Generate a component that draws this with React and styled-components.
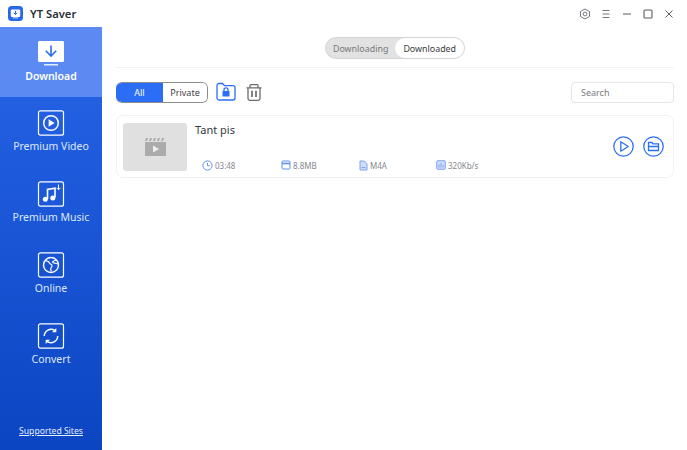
import React from "react";
import styled, { createGlobalStyle } from "styled-components";

const Global = createGlobalStyle`
  html, body { margin: 0; padding: 0; background: #fff; }
  body { font-family: "Noto Sans", "Open Sans", sans-serif; }
`;
const Page = styled.div`
  width: 687px; height: 450px; display: flex; flex-direction: column; overflow: hidden; background: #fff;
`;
const TitleBar = styled.header`
  height: 27px; flex: none; display: flex; align-items: center; padding-left: 8px; padding-right: 11px; gap: 7px;
`;
const AppName = styled.div`
  font-size: 11.2px; font-weight: 600; color: #2b2f36; flex: 1;
`;
const WinControls = styled.div`
  display: flex; align-items: center; gap: 7px; color: #6a6d72;
  svg { display: block; }
`;
const Body = styled.div`
  flex: 1; display: flex; min-height: 0;
`;
const Sidebar = styled.nav`
  width: 102px; flex: none; display: flex; flex-direction: column;
  background: linear-gradient(180deg, #2765e8 0%, #0b45c2 100%);
`;
const NavItem = styled.div`
  height: ${p => (p.$active ? 70 : 71)}px; flex: none; display: flex; flex-direction: column; align-items: center;
  padding-top: 13px; box-sizing: border-box;
  gap: 2px;
  color: ${p => (p.$active ? "#fff" : "#dfe8fb")};
  background: ${p => (p.$active ? "#5a8af2" : "transparent")};
  font-size: 10.5px; font-weight: ${p => (p.$active ? 600 : 400)};
  line-height: 16px;
  svg { display: block; }
`;
const SupportLink = styled.a`
  margin-top: auto; margin-bottom: 12px; text-align: center; color: #e6edfc; font-size: 8.6px; line-height: 14px; text-decoration: underline;
`;
const Main = styled.main`
  flex: 1; padding: 0 13px 0 14px; min-width: 0;
`;
const TabRow = styled.div`
  height: 41px; display: flex; justify-content: center; align-items: flex-start; padding-top: 10px; box-sizing: border-box;
  border-bottom: 1px solid #f1f2f5;
`;
const TabSwitch = styled.div`
  display: flex; height: 22px; box-sizing: border-box; border-radius: 11px; background: #e2e2e2; border: 1px solid #d4d4d4;
`;
const Tab = styled.div`
  height: 20px; padding: 0 ${p => (p.$on ? "8px" : "7px")}; border-radius: 10px; display: flex; align-items: center;
  font-size: 8.9px; color: ${p => (p.$on ? "#3a3d42" : "#77797d")};
  background: ${p => (p.$on ? "#fff" : "transparent")};
`;
const Toolbar = styled.div`
  display: flex; align-items: center; height: 22px; margin-top: 13px;
`;
const Segment = styled.div`
  display: flex; height: 21px; width: 92px; border-radius: 6px; overflow: hidden; box-sizing: border-box;
  border: 1px solid #8c8c8c; border-left: none; margin-right: 8px;
`;
const SegBtn = styled.div`
  display: flex; align-items: center; justify-content: center; font-size: 9px;
  flex: ${p => (p.$on ? "0 0 47px" : "1")};
  background: ${p => (p.$on ? "#2b6ef5" : "#fff")};
  color: ${p => (p.$on ? "#fff" : "#3f4247")};
`;
const IconBtn = styled.div`
  margin-right: ${p => p.$mr || 0}px; display: flex; svg { display: block; }
`;
const SearchBox = styled.div`
  margin-left: auto; width: 103px; height: 21px; box-sizing: border-box; border: 1px solid #e6e6e6; border-radius: 4px;
  font-size: 9px; color: #77797d; display: flex; align-items: center; padding-left: 9px; box-shadow: 0 0 1px #eee;
`;
const Card = styled.section`
  margin-top: 12px; height: 63px; box-sizing: border-box; border: 1px solid #f0f2f5; border-radius: 7px;
  display: flex; padding: 6px 9px 5px 6px; align-items: stretch;
`;
const Thumb = styled.div`
  width: 64px; height: 48px; flex: none; border-radius: 3px; background: #e0e0e0; display: flex; align-items: center; justify-content: center; margin-top: 1px;
`;
const Info = styled.div`
  flex: 1; margin-left: 8px; display: flex; flex-direction: column;
`;
const Title = styled.div`
  font-size: 11px; color: #35383d; line-height: 16px;
`;
const Meta = styled.div`
  display: flex; margin-top: auto; padding-left: 7px; height: 14px; align-items: center;
`;
const MetaItem = styled.div`
  width: ${p => p.$w}px; display: flex; align-items: center; gap: 2px; font-size: 8px; color: #85878b; line-height: 11px;
  svg { display: block; flex: none; }
`;
const Actions = styled.div`
  display: flex; align-items: center; gap: 9px; color: #2b6ef5; margin-bottom: 2px;
  svg { display: block; }
`;

const Box = ({ children }) => (
  <svg width="28" height="26" viewBox="0 0 28 26" fill="none" stroke="#fff" strokeWidth="1.2">
    <rect x="1.5" y="0.8" width="25" height="24.4" rx="2" />
    {children}
  </svg>
);

const DownloadIcon = () => (
  <svg width="28" height="26" viewBox="0 0 28 26">
    <path d="M2 1h24a1.500 1.500 0 0 1 1 1.500v18a1.500 1.500 0 0 1-1 1.500H2a1.500 1.500 0 0 1-1-1.500v-18A1.500 1.500 0 0 1 2 1z" fill="#fff" />
    <rect x="7" y="24" width="14" height="1.500" fill="#e4ecfd" />
    <path d="M14 5.500v10M8.800 10.800 14 16l5.200-5.200" fill="none" stroke="#2f6df0" strokeWidth="1.600" />
  </svg>
);
const VideoIcon = () => (
  <Box>
    <circle cx="14" cy="13" r="7.300" strokeWidth="1.500" />
    <path d="M11.600 9.200v7.600l6-3.800z" fill="#fff" stroke="none" />
  </Box>
);
const MusicIcon = () => (
  <Box>
    <path d="M10.500 18V8.500l7.500-1.300V16.500" strokeWidth="1.600" />
    <circle cx="8.300" cy="18.300" r="2.500" fill="#fff" stroke="none" />
    <circle cx="15.800" cy="17" r="2.500" fill="#fff" stroke="none" />
    <path d="M21.500 3.500v5M19.500 6.800l2 2 2-2" strokeWidth="1" />
  </Box>
);
const GlobeIcon = () => (
  <Box>
    <circle cx="14" cy="13" r="7.500" strokeWidth="1.400" />
    <path d="M8 9c2.500-.5 4 .5 4.500 2 .4 1.300 2 1.200 2.500 2.300.5 1-.4 2-1 2.700-.5.7-.2 2.300.3 3.500M19 8c-1.500.5-3 .8-3.500 2 0 1 2 1 3 1.300l2.200.7" strokeWidth="1.200" />
  </Box>
);
const ConvertIcon = () => (
  <Box>
    <path d="M7.300 13a6.700 6.700 0 0 1 10.500-5.500M20.700 13a6.700 6.700 0 0 1-10.500 5.500" strokeWidth="1.400" />
    <path d="M19.300 5v4.300H15z" fill="#fff" stroke="none" />
    <path d="M8.700 21v-4.300H13z" fill="#fff" stroke="none" />
  </Box>
);

const items = [
  { label: "Download", Icon: DownloadIcon, active: true },
  { label: "Premium Video", Icon: VideoIcon },
  { label: "Premium Music", Icon: MusicIcon },
  { label: "Online", Icon: GlobeIcon },
  { label: "Convert", Icon: ConvertIcon },
];

const Clock = () => (
  <svg width="11" height="11" viewBox="0 0 11 11" fill="none" stroke="#5f8ff3" strokeWidth="1">
    <circle cx="5.500" cy="5.500" r="4.600" /><path d="M5.500 2.800v3h2.200" />
  </svg>
);
const Size = () => (
  <svg width="10" height="10" viewBox="0 0 10 10" fill="none" stroke="#5f8ff3" strokeWidth="1">
    <rect x="1" y="1" width="8" height="8" rx="1" /><path d="M1 3.500h8" strokeWidth="1.600" />
  </svg>
);
const FileIc = () => (
  <svg width="9" height="11" viewBox="0 0 9 11" fill="#cfdcfa" stroke="#7fa5f5" strokeWidth="1">
    <path d="M1 1h4.300L8 3.800V10H1z" /><path d="M2.500 7.500h4" />
  </svg>
);
const Bars = () => (
  <svg width="10" height="10" viewBox="0 0 10 10" fill="#cfdcfa" stroke="#7fa5f5" strokeWidth="1">
    <rect x="0.700" y="0.700" width="8.600" height="8.600" rx="1" /><path d="M3 7.500V4.500M5 7.500V3M7 7.500V5" />
  </svg>
);

export default function App() {
  return (
    <Page>
      <Global />
      <TitleBar>
        <svg width="15" height="15" viewBox="0 0 15 15">
          <rect width="15" height="15" rx="3.500" fill="#2a68e8" />
          <rect x="2.800" y="3.500" width="9.400" height="7.500" rx="1" fill="#fff" />
          <path d="M7.500 4.800v3.500M5.800 6.800l1.700 1.700 1.700-1.700" fill="none" stroke="#2a68e8" strokeWidth="1" />
          <rect x="5" y="11.500" width="5" height="0.800" fill="#fff" />
        </svg>
        <AppName>YT Saver</AppName>
        <WinControls>
          <svg width="14" height="14" viewBox="0 0 14 14" fill="none" stroke="#75787c" strokeWidth="1">
            <path d="M7 2l4.500 2.500v5L7 12 2.500 9.500v-5z" /><circle cx="7" cy="7" r="1.900" />
          </svg>
          <svg width="14" height="14" viewBox="0 0 14 14" fill="none" stroke="#75787c" strokeWidth="1">
            <path d="M3.500 3.500h7M3.500 7h7M3.500 10.500h7" />
          </svg>
          <svg width="14" height="14" viewBox="0 0 14 14" fill="none" stroke="#5a5d62" strokeWidth="1">
            <path d="M3 7h8" />
          </svg>
          <svg width="14" height="14" viewBox="0 0 14 14" fill="none" stroke="#5a5d62" strokeWidth="1.100">
            <rect x="3" y="3" width="8" height="8" rx="1" />
          </svg>
          <svg width="14" height="14" viewBox="0 0 14 14" fill="none" stroke="#5a5d62" strokeWidth="1">
            <path d="M3.500 3.500l7 7M10.500 3.500l-7 7" />
          </svg>
        </WinControls>
      </TitleBar>
      <Body>
        <Sidebar>
          {items.map(({ label, Icon, active }) => (
            <NavItem key={label} $active={active}><Icon />{label}</NavItem>
          ))}
          <SupportLink>Supported Sites</SupportLink>
        </Sidebar>
        <Main>
          <TabRow>
            <TabSwitch>
              <Tab>Downloading</Tab>
              <Tab $on>Downloaded</Tab>
            </TabSwitch>
          </TabRow>
          <Toolbar>
            <Segment>
              <SegBtn $on>All</SegBtn>
              <SegBtn>Private</SegBtn>
            </Segment>
            <IconBtn $mr={10}>
              <svg width="20" height="20" viewBox="0 0 20 20" fill="none" stroke="#2b6ef5" strokeWidth="1.300">
                <path d="M1 3.500a2 2 0 0 1 2-2h3.500l2 2.200H17a2 2 0 0 1 2 2v10.300a2 2 0 0 1-2 2H3a2 2 0 0 1-2-2z" />
                <rect x="6.500" y="9" width="7" height="5.500" rx="0.600" fill="#2b6ef5" stroke="none" />
                <path d="M8 9V7.800a2 2 0 0 1 4 0V9" />
              </svg>
            </IconBtn>
            <IconBtn>
              <svg width="16" height="17" viewBox="0 0 16 17" fill="none" stroke="#6c6c6c" strokeWidth="1.300">
                <path d="M.5 3.800h15M4 3.800V1.500a.8.8 0 0 1 .8-.8h6.400a.8.8 0 0 1 .8.8v2.300M2 3.800v10.700a1.800 1.800 0 0 0 1.800 1.800h8.400a1.800 1.800 0 0 0 1.800-1.800V3.800" />
                <path d="M6 6.800v6.200M10 6.800v6.200" strokeWidth="1.700" />
              </svg>
            </IconBtn>
            <SearchBox>Search</SearchBox>
          </Toolbar>
          <Card>
            <Thumb>
              <svg width="21" height="18" viewBox="0 0 21 18">
                <path d="M1 0h2l-1 3H0zM5 0h2L6 3H4zM9 0h2l-1 3H8zM13 0h2l-1 3h-2zM17 0h2l-1 3h-2z" fill="#ababab" />
                <path d="M0 4h21v14H0z" fill="#ababab" />
                <path d="M8 7.500v7l6-3.500z" fill="#eee" />
              </svg>
            </Thumb>
            <Info>
              <Title>Tant pis</Title>
              <Meta>
                <MetaItem $w={79}><Clock />03:48</MetaItem>
                <MetaItem $w={78}><Size />8.8MB</MetaItem>
                <MetaItem $w={77}><FileIc />M4A</MetaItem>
                <MetaItem $w={70}><Bars />320Kb/s</MetaItem>
              </Meta>
            </Info>
            <Actions>
              <svg width="21" height="21" viewBox="0 0 21 21" fill="none" stroke="currentColor" strokeWidth="1.300">
                <circle cx="10.500" cy="10.500" r="9.700" />
                <path d="M7.800 5.800v9.400l7.500-4.700z" strokeLinejoin="round" />
              </svg>
              <svg width="21" height="21" viewBox="0 0 21 21" fill="none" stroke="currentColor" strokeWidth="1.300">
                <circle cx="10.500" cy="10.500" r="9.700" />
                <path d="M5.500 6.500h3.500l1 1.300h5.500v6.700h-10zM5.500 10.500h10" />
              </svg>
            </Actions>
          </Card>
        </Main>
      </Body>
    </Page>
  );
}
